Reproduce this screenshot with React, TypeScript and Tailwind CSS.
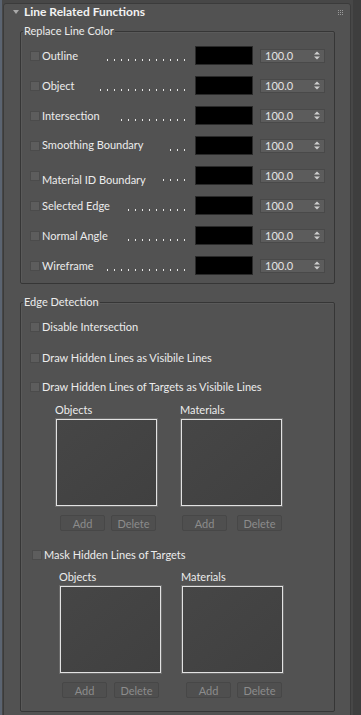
import React from "react";

const font = { fontFamily: "Lato, 'Liberation Sans', sans-serif" };

type Row = { label: string; dots: number; dy?: number };

const rows: Row[] = [
  { label: "Outline", dots: 12 },
  { label: "Object", dots: 13 },
  { label: "Intersection", dots: 10 },
  { label: "Smoothing Boundary", dots: 3, dy: -1 },
  { label: "Material ID Boundary", dots: 4, dy: 4 },
  { label: "Selected Edge", dots: 9 },
  { label: "Normal Angle", dots: 9 },
  { label: "Wireframe", dots: 12 },
];

function Check() {
  return <div className="w-[10px] h-[10px] shrink-0 bg-[#5d5d5d] border border-[#4b4b4b]" />;
}

function Spinner() {
  return (
    <div className="w-[65px] h-[14px] bg-[#5c5c5c] border border-[#494949] flex items-center pl-[4px] pr-[4px]">
      <span className="text-[11px] leading-none text-[#e4e4e4] flex-1">100.0</span>
      <svg width="6" height="9" viewBox="0 0 6 9">
        <path d="M0 3.5 L3 0.5 L6 3.5 Z" fill="#cfcfcf" />
        <path d="M0 5.5 L3 8.5 L6 5.5 Z" fill="#cfcfcf" />
      </svg>
    </div>
  );
}

function ColorRow({ row }: { row: Row }) {
  return (
    <div className="h-[19px] flex items-center">
      <Check />
      <span
        className="ml-[2px] text-[11px] leading-[14px] text-[#ececec] whitespace-nowrap relative"
        style={{ top: row.dy ?? 0 }}
      >
        {row.label}
      </span>
      <div className="ml-auto mr-[10px] flex gap-[6px] self-end mb-[4px]">
        {Array.from({ length: row.dots }).map((_, i) => (
          <span key={i} className="w-[1px] h-[2px] bg-[#e8e8e8]" />
        ))}
      </div>
      <div className="w-[58px] h-[19px] bg-black border border-[#2a2a2a]" />
      <div className="ml-[7px]">
        <Spinner />
      </div>
    </div>
  );
}

function Btn({ label, w = 45 }: { label: string; w?: number }) {
  return (
    <div
      className="h-[16px] bg-[#4f4f4f] border border-[#474747] rounded-[2px] flex items-center justify-center text-[11px] leading-none text-[#8c8c8c]"
      style={{ width: w }}
    >
      {label}
    </div>
  );
}

function ListCol({
  title,
  titleDx,
  addDx,
  gap,
}: {
  title: string;
  titleDx: number;
  addDx: number;
  gap: number;
}) {
  return (
    <div className="flex flex-col w-[101px]">
      <span
        className="text-[11px] leading-[14px] text-[#ececec] relative"
        style={{ left: titleDx }}
      >
        {title}
      </span>
      <div
        className="h-[87px] bg-gradient-to-br from-[#464646] to-[#404040] border border-[#e2e2e2] shadow-[0_0_0_1px_#6a6a6a]"
        style={{ marginTop: 2 }}
      />
      <div className="flex mt-[9px]" style={{ paddingLeft: addDx, gap }}>
        <Btn label="Add" />
        <Btn label="Delete" />
      </div>
    </div>
  );
}

export default function App() {
  return (
    <div className="w-[361px] h-[715px] bg-[#474747] flex overflow-hidden" style={font}>
      <div className="w-[2px] bg-[#5b6471] shrink-0" />
      <div className="w-[348px] ml-[1px] mt-[3px] shrink-0 bg-[#525252] border border-[#3b3b3b] rounded-[3px] pl-[16px] pr-[15px] flex flex-col h-[720px]">
        {/* header */}
        <div className="h-[16px] flex items-center -ml-[16px] -mr-[15px] relative">
          <svg width="6" height="4" viewBox="0 0 6 4" className="ml-[9px]">
            <path d="M0 0 L6 0 L3 4 Z" fill="#a9a9a9" />
          </svg>
          <span className="ml-[5px] text-[12px] font-bold leading-none text-[#f2f2f2]">
            Line Related Functions
          </span>
          <div className="ml-auto mr-[7px] grid grid-cols-3 gap-[1px]">
            {Array.from({ length: 9 }).map((_, i) => (
              <span key={i} className="w-[1px] h-[1px] bg-[#9a9a9a]" />
            ))}
          </div>
        </div>

        {/* Replace Line Color */}
        <fieldset className="mt-[4px] border border-[#363636] rounded-[2px] pl-[9px] pr-[9px] pt-[8px] pb-[8px] shadow-[inset_1px_1px_0_#5a5a5a]">
          <legend className="-ml-[7px] px-[1px] text-[11px] leading-[14px] text-[#ececec]">
            Replace Line Color
          </legend>
          <div className="flex flex-col gap-[11px]">
            {rows.map((r) => (
              <ColorRow key={r.label} row={r} />
            ))}
          </div>
        </fieldset>

        {/* Edge Detection */}
        <fieldset className="mt-[11px] border border-[#363636] rounded-[2px] pl-[9px] pr-[9px] pt-[11px] pb-[13px] shadow-[inset_1px_1px_0_#5a5a5a]">
          <legend className="-ml-[7px] px-[1px] text-[11px] leading-[14px] text-[#ececec]">
            Edge Detection
          </legend>
          <div className="h-[14px] flex items-center">
            <Check />
            <span className="ml-[2px] text-[11px] leading-[14px] text-[#ececec]">Disable Intersection</span>
          </div>
          <div className="h-[14px] flex items-center mt-[17px]">
            <Check />
            <span className="ml-[2px] text-[11px] leading-[14px] text-[#ececec]">
              Draw Hidden Lines as Visibile Lines
            </span>
          </div>
          <div className="h-[14px] flex items-center mt-[15px]">
            <Check />
            <span className="ml-[2px] text-[11px] leading-[14px] text-[#ececec]">
              Draw Hidden Lines of Targets as Visibile Lines
            </span>
          </div>

          <div className="flex mt-[9px] ml-[26px] gap-[24px]">
            <ListCol title="Objects" titleDx={-1} addDx={4} gap={6} />
            <ListCol title="Materials" titleDx={-1} addDx={1} gap={10} />
          </div>

          <div className="h-[14px] flex items-center mt-[17px] ml-[2px]">
            <Check />
            <span className="ml-[2px] text-[11px] leading-[14px] text-[#ececec]">
              Mask Hidden Lines of Targets
            </span>
          </div>

          <div className="flex mt-[8px] ml-[30px] gap-[21px]">
            <ListCol title="Objects" titleDx={-1} addDx={2} gap={7} />
            <ListCol title="Materials" titleDx={-1} addDx={4} gap={6} />
          </div>
        </fieldset>
      </div>
      <div className="w-[2px] shrink-0" />
      <div className="flex-1 bg-[#3e3e3e]" />
    </div>
  );
}
